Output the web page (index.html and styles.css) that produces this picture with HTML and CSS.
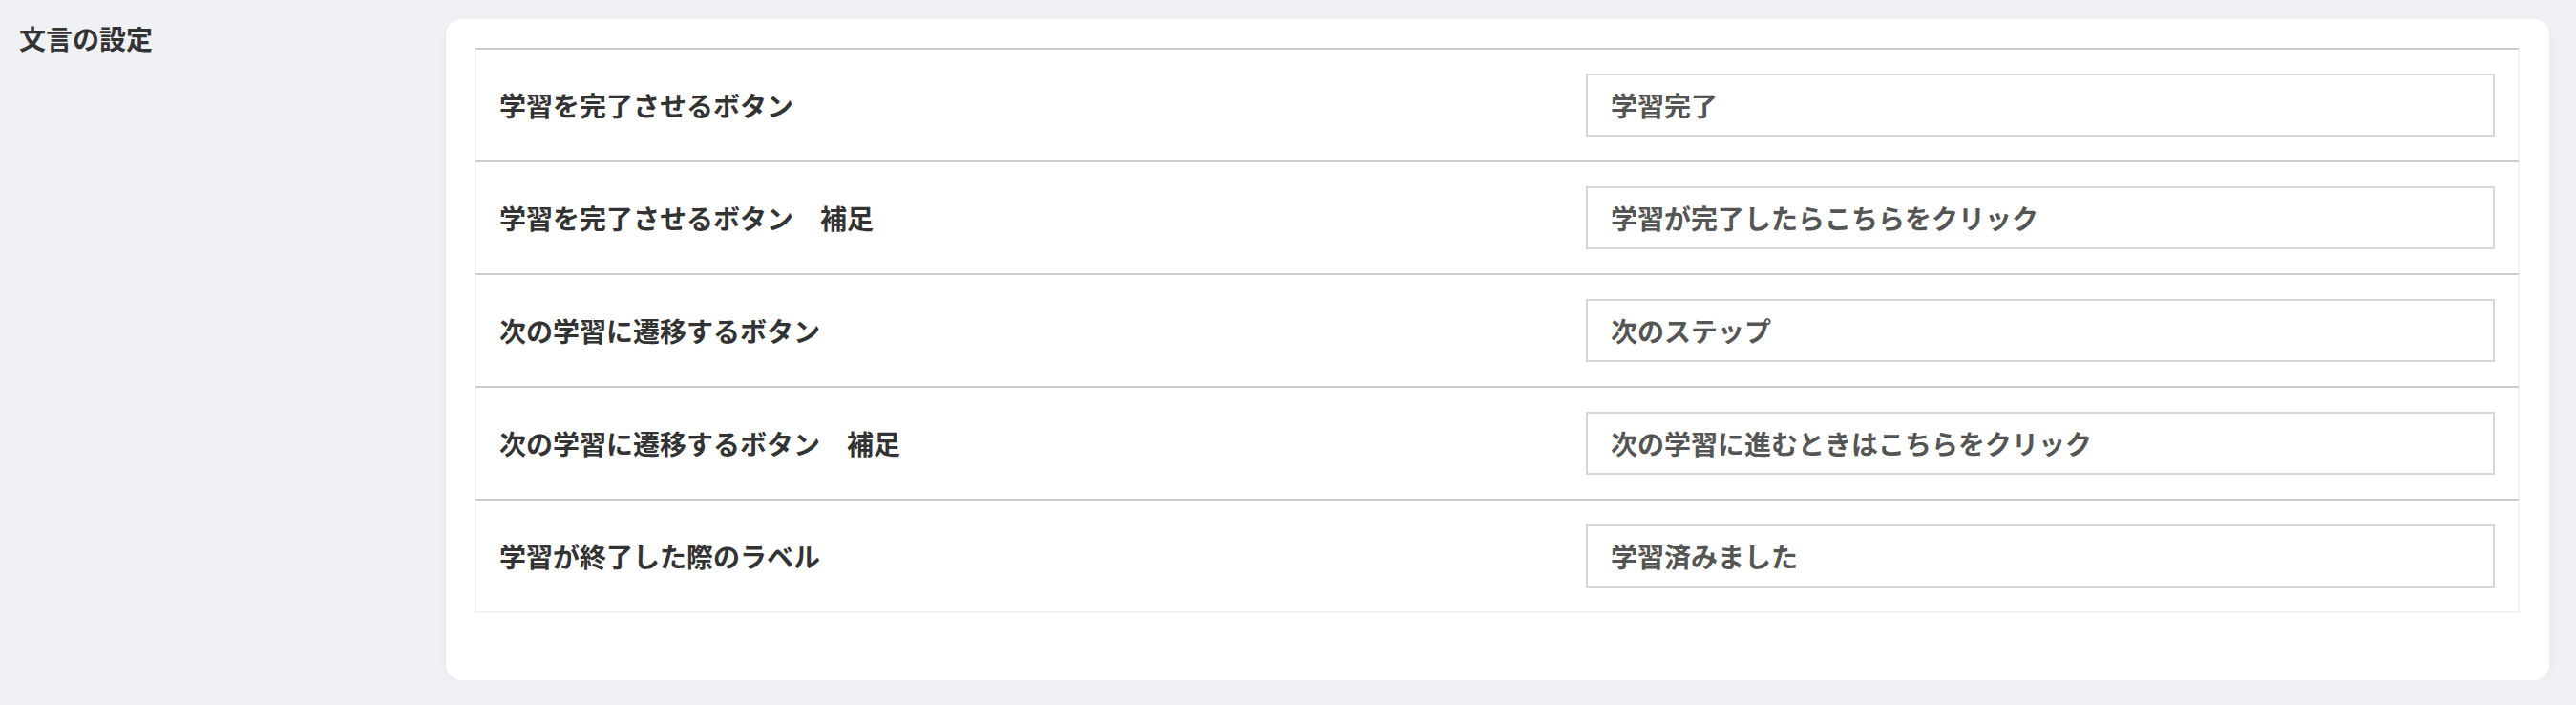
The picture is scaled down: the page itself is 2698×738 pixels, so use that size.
FILE: index.html
```html
<!DOCTYPE html>
<html lang="ja">
<head>
<meta charset="utf-8">
<title>文言の設定</title>
<link rel="stylesheet" href="styles.css">
</head>
<body>
<div class="section">
  <h2 class="section-title">文言の設定</h2>
  <div class="card">
    <div class="table">
      <div class="row">
        <div class="label">学習を完了させるボタン</div>
        <div class="field"><input class="input" type="text" value="学習完了"></div>
      </div>
      <div class="row">
        <div class="label">学習を完了させるボタン　補足</div>
        <div class="field"><input class="input" type="text" value="学習が完了したらこちらをクリック"></div>
      </div>
      <div class="row">
        <div class="label">次の学習に遷移するボタン</div>
        <div class="field"><input class="input" type="text" value="次のステップ"></div>
      </div>
      <div class="row">
        <div class="label">次の学習に遷移するボタン　補足</div>
        <div class="field"><input class="input" type="text" value="次の学習に進むときはこちらをクリック"></div>
      </div>
      <div class="row">
        <div class="label">学習が終了した際のラベル</div>
        <div class="field"><input class="input" type="text" value="学習済みました"></div>
      </div>
    </div>
  </div>
</div>
</body>
</html>
```
FILE: styles.css
```css
html, body {
  margin: 0;
  padding: 0;
}
body {
  background: #f0f1f5;
  font-family: "Noto Sans CJK JP", "Noto Sans", sans-serif;
  color: #333;
}
.section {
  display: flex;
  align-items: flex-start;
  padding: 20px 28px 0 20px;
}
.section-title {
  flex: 0 0 447px;
  margin: 0;
  font-size: 28px;
  line-height: 40px;
  font-weight: 700;
  color: #333;
}
.card {
  flex: 1;
  background: #fff;
  border-radius: 16px;
  padding: 30px 31px 70px 30px;
  box-shadow: 0 4px 16px rgba(30, 40, 80, 0.04);
}
.table {
  border-bottom: 2px solid #f2f2f2;
}
.row {
  display: grid;
  grid-template-columns: 1fr 1000px;
  align-items: center;
  height: 118px;
  box-sizing: border-box;
  border-top: 2px solid #cccccc;
  border-left: 2px solid #f2f2f2;
  border-right: 2px solid #f2f2f2;
}
.label {
  padding-left: 24px;
  font-size: 28px;
  font-weight: 700;
  color: #333;
}
.field {
  padding: 0 24px;
}
.input {
  display: block;
  width: 100%;
  height: 66px;
  box-sizing: border-box;
  border: 2px solid #d4d7de;
  border-radius: 0;
  padding: 0 24px;
  font-family: "Noto Sans CJK JP", "Noto Sans", sans-serif;
  font-size: 28px;
  font-weight: 700;
  color: #555;
  background: #fff;
  outline: none;
}
```
